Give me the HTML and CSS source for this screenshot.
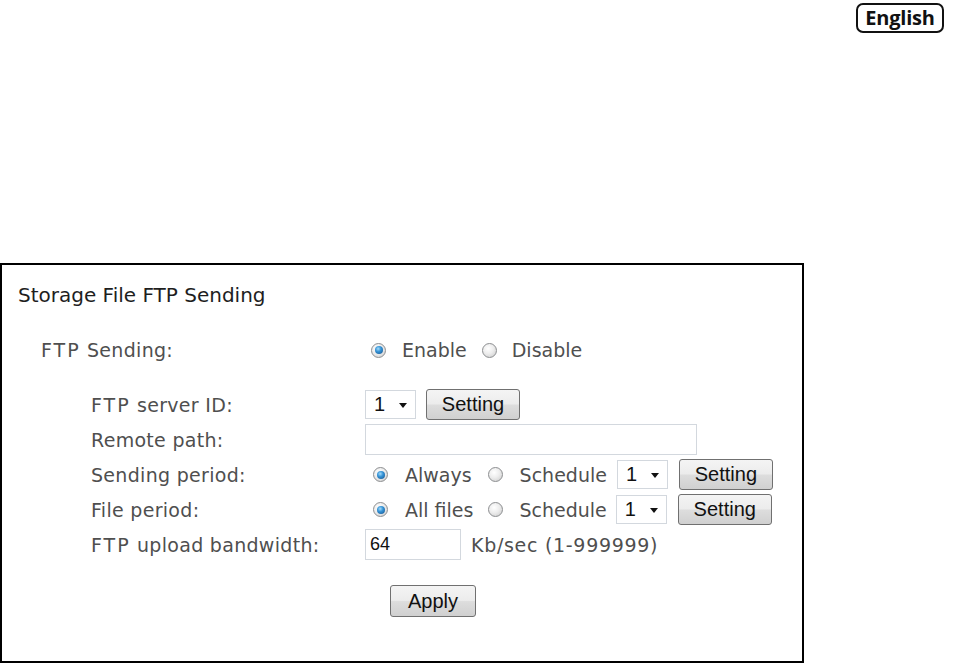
FILE: index.html
```html
<!DOCTYPE html>
<html>
<head>
<meta charset="utf-8">
<title>Storage File FTP Sending</title>
<link rel="stylesheet" href="styles.css">
</head>
<body>
<div class="top">
  <span class="lang">English</span>
</div>
<div class="panel">
  <div class="title">Storage File FTP Sending</div>
  <div class="row main">
    <div class="lbl main-lbl"><span class="ab">FTP</span> Sending:</div>
    <div class="ctl">
      <span class="radio on"></span><span class="opt">Enable</span>
      <span class="radio second"></span><span class="opt">Disable</span>
    </div>
  </div>
  <div class="sub">
    <div class="row">
      <div class="lbl"><span class="ab">FTP</span> server ID:</div>
      <div class="ctl">
        <span class="sel">1<span class="tri"></span></span>
        <span class="btn set first">Setting</span>
      </div>
    </div>
    <div class="row">
      <div class="lbl">Remote path:</div>
      <div class="ctl">
        <span class="inp path"></span>
      </div>
    </div>
    <div class="row">
      <div class="lbl">Sending period:</div>
      <div class="ctl">
        <span class="radio on sp"></span><span class="opt">Always</span>
        <span class="radio second sp2"></span><span class="opt">Schedule</span>
        <span class="sel sched">1<span class="tri"></span></span>
        <span class="btn set">Setting</span>
      </div>
    </div>
    <div class="row">
      <div class="lbl">File period:</div>
      <div class="ctl">
        <span class="radio on sp"></span><span class="opt">All files</span>
        <span class="radio second sp2 fp"></span><span class="opt">Schedule</span>
        <span class="sel sched fp">1<span class="tri"></span></span>
        <span class="btn set">Setting</span>
      </div>
    </div>
    <div class="row">
      <div class="lbl"><span class="ab">FTP</span> upload bandwidth:</div>
      <div class="ctl">
        <span class="inp bw">64</span>
        <span class="unit">Kb/sec (1-999999)</span>
      </div>
    </div>
  </div>
  <div class="apply-row">
    <span class="btn apply">Apply</span>
  </div>
</div>
</body>
</html>
```

FILE: styles.css
```css
html, body {
  margin: 0;
  padding: 0;
  background: #fff;
}

body {
  width: 958px;
  height: 663px;
  overflow: hidden;
  font-family: "DejaVu Sans", Verdana, sans-serif;
}

.top {
  height: 263px;
  display: flex;
  justify-content: flex-end;
  align-items: flex-start;
  padding: 3px 14px 0 0;
  box-sizing: border-box;
}

.lang {
  display: inline-flex;
  align-items: center;
  justify-content: center;
  width: 88px;
  height: 30px;
  box-sizing: border-box;
  border: 2px solid #111;
  border-radius: 7px;
  font-family: "Open Sans", "DejaVu Sans", sans-serif;
  font-weight: 700;
  font-size: 20px;
  color: #111;
  letter-spacing: -0.2px;
  padding-bottom: 1px;
}

.panel {
  width: 804px;
  height: 400px;
  box-sizing: border-box;
  border: 2px solid #000;
  padding: 18px 0 0 16px;
}

.title {
  font-size: 20px;
  line-height: 24px;
  color: #1e1e1e;
}

.row {
  display: flex;
  align-items: center;
  height: 35px;
  color: #4f4f4f;
  font-size: 19px;
}

.row.main {
  height: 36px;
  margin-top: 25px;
}

.lbl {
  margin-left: 73px;
  width: 274px;
  flex: none;
  white-space: nowrap;
  letter-spacing: 0.3px;
}

.lbl .ab {
  letter-spacing: 2px;
}

.main-lbl {
  margin-left: 23px;
  width: 324px;
}

.ctl {
  display: flex;
  align-items: center;
  white-space: nowrap;
}

.sub {
  margin-top: 19px;
}

.radio {
  width: 15px;
  height: 15px;
  box-sizing: border-box;
  border-radius: 50%;
  border: 1px solid #8c8e90;
  background: radial-gradient(circle at 40% 35%, #ffffff 0%, #ededed 45%, #c9c9c9 100%);
  margin-left: 6px;
  margin-right: 16px;
  flex: none;
  display: flex;
  align-items: center;
  justify-content: center;
}

.radio.sp {
  margin-left: 8px;
  margin-right: 17px;
}

.radio.second {
  margin-left: 15px;
  margin-right: 15px;
}

.radio.second.sp2 {
  margin-left: 16px;
  margin-right: 17px;
}

.radio.second.sp2.fp {
  margin-left: 15px;
  margin-right: 16px;
}

.radio.on::after {
  content: "";
  width: 8px;
  height: 8px;
  border-radius: 50%;
  background: radial-gradient(circle at 40% 35%, #a6dcfa 0%, #3593d6 40%, #15508a 100%);
}

.sel {
  position: relative;
  display: inline-flex;
  align-items: center;
  width: 51px;
  height: 29px;
  box-sizing: border-box;
  border: 1px solid #d3d8de;
  background: #fff;
  padding-left: 8px;
  font-family: "Liberation Sans", Arial, sans-serif;
  font-size: 20px;
  color: #111;
}

.sel.sched {
  margin-left: 10px;
}

.sel.sched.fp {
  margin-left: 9px;
}

.tri {
  position: absolute;
  right: 8px;
  top: 12px;
  width: 0;
  height: 0;
  border-left: 4px solid transparent;
  border-right: 4px solid transparent;
  border-top: 5px solid #111;
}

.btn {
  display: inline-flex;
  align-items: center;
  justify-content: center;
  height: 31px;
  box-sizing: border-box;
  border: 1px solid #707070;
  border-radius: 3px;
  background: linear-gradient(#f4f4f4 0%, #ececec 48%, #dddddd 52%, #d0d0d0 100%);
  font-family: "Liberation Sans", Arial, sans-serif;
  font-size: 20px;
  color: #111;
}

.btn.set {
  width: 94px;
  margin-left: 11px;
}

.btn.set.first {
  margin-left: 10px;
}

.inp {
  display: inline-flex;
  align-items: center;
  height: 31px;
  box-sizing: border-box;
  border: 1px solid #d3d8de;
  background: #fff;
  font-family: "Liberation Sans", Arial, sans-serif;
  font-size: 18px;
  color: #111;
}

.inp.path {
  width: 332px;
}

.inp.bw {
  width: 96px;
  padding-left: 4px;
}

.unit {
  margin-left: 10px;
  letter-spacing: 0.7px;
}

.apply-row {
  margin-top: 23px;
  padding-left: 372px;
}

.btn.apply {
  width: 86px;
  height: 32px;
}
```
